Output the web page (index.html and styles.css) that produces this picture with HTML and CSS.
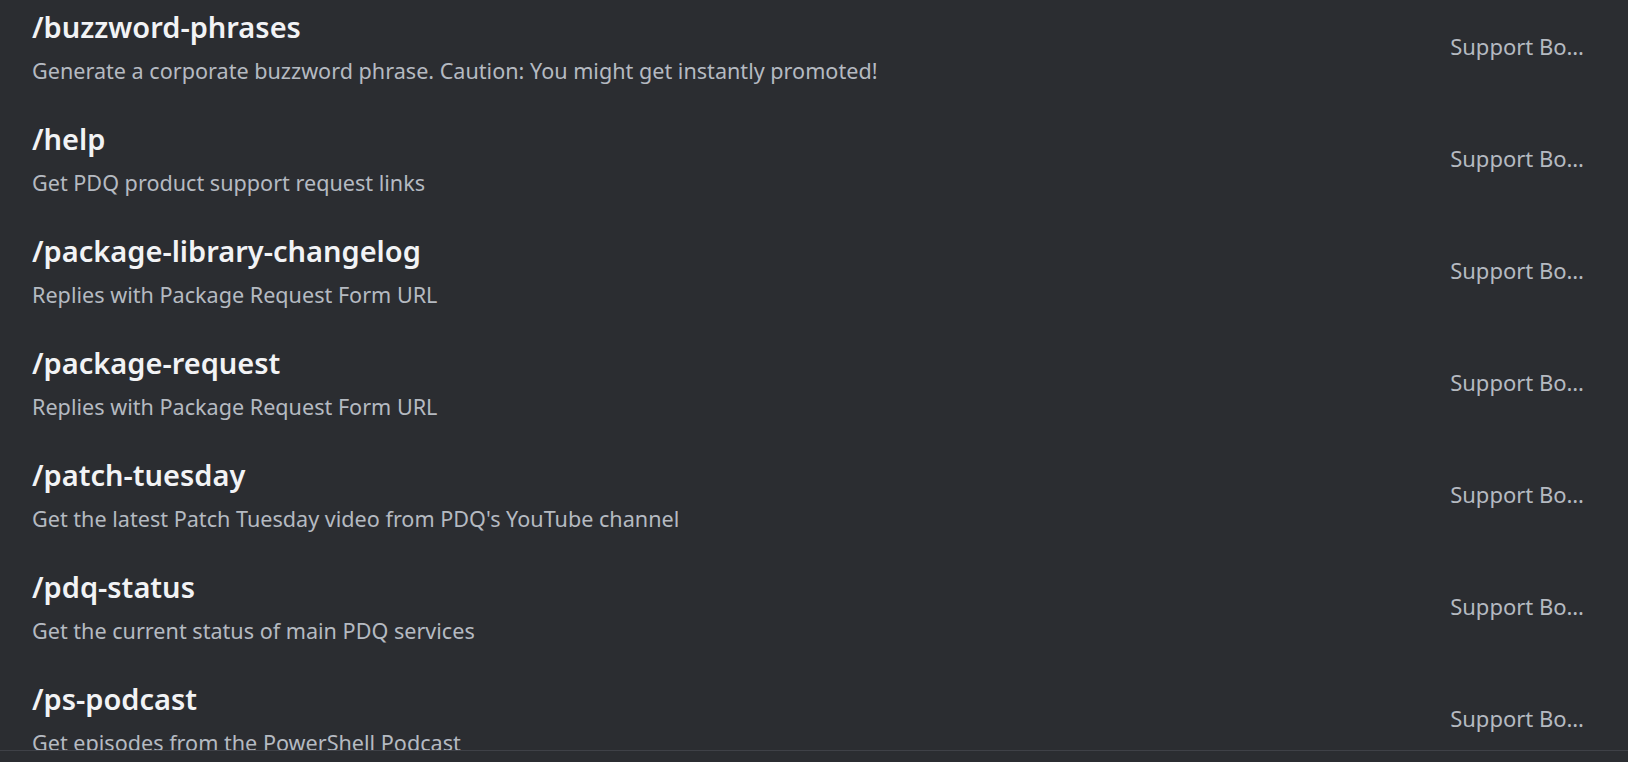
FILE: index.html
```html
<!DOCTYPE html>
<html lang="en">
<head>
<meta charset="utf-8">
<title>Commands</title>
<link rel="stylesheet" href="styles.css">
</head>
<body>
<div class="panel">
  <div class="list">
    <div class="row">
      <div class="info">
        <div class="name">/buzzword-phrases</div>
        <div class="desc">Generate a corporate buzzword phrase. Caution: You might get instantly promoted!</div>
      </div>
      <div class="source" title="Support Bot">Support Bo…</div>
    </div>
    <div class="row">
      <div class="info">
        <div class="name">/help</div>
        <div class="desc">Get PDQ product support request links</div>
      </div>
      <div class="source" title="Support Bot">Support Bo…</div>
    </div>
    <div class="row">
      <div class="info">
        <div class="name">/package-library-changelog</div>
        <div class="desc">Replies with Package Request Form URL</div>
      </div>
      <div class="source" title="Support Bot">Support Bo…</div>
    </div>
    <div class="row">
      <div class="info">
        <div class="name">/package-request</div>
        <div class="desc">Replies with Package Request Form URL</div>
      </div>
      <div class="source" title="Support Bot">Support Bo…</div>
    </div>
    <div class="row">
      <div class="info">
        <div class="name">/patch-tuesday</div>
        <div class="desc">Get the latest Patch Tuesday video from PDQ's YouTube channel</div>
      </div>
      <div class="source" title="Support Bot">Support Bo…</div>
    </div>
    <div class="row">
      <div class="info">
        <div class="name">/pdq-status</div>
        <div class="desc">Get the current status of main PDQ services</div>
      </div>
      <div class="source" title="Support Bot">Support Bo…</div>
    </div>
    <div class="row">
      <div class="info">
        <div class="name">/ps-podcast</div>
        <div class="desc">Get episodes from the PowerShell Podcast</div>
      </div>
      <div class="source" title="Support Bot">Support Bo…</div>
    </div>
  </div>
  <div class="footer"></div>
</div>
</body>
</html>
```

FILE: styles.css
```css
html, body {
  margin: 0;
  padding: 0;
  background: #2b2d31;
}

body {
  width: 1628px;
  height: 762px;
  overflow: hidden;
  font-family: "Noto Sans", "Open Sans", sans-serif;
}

.panel {
  display: flex;
  flex-direction: column;
  height: 762px;
}

.list {
  height: 750px;
  overflow: hidden;
  display: flex;
  flex-direction: column;
  gap: 20px;
  padding: 0 44px 0 32px;
}

.row {
  flex: 0 0 auto;
  height: 92px;
  display: flex;
  align-items: center;
  justify-content: space-between;
  gap: 24px;
}

.info {
  display: flex;
  flex-direction: column;
  padding-top: 9px;
  padding-bottom: 7px;
  gap: 12px;
  min-width: 0;
  align-self: stretch;
  box-sizing: border-box;
}

.name {
  color: #f2f3f5;
  font-size: 29px;
  font-weight: 600;
  line-height: 36px;
  white-space: nowrap;
}

.desc {
  color: #b5bac1;
  font-size: 21.6px;
  line-height: 28px;
  white-space: nowrap;
}

.source {
  color: #b5bac1;
  font-size: 22px;
  line-height: 28px;
  white-space: nowrap;
}

.footer {
  flex: 1;
  border-top: 1px solid #3f4147;
  background: #2b2d31;
}
```
